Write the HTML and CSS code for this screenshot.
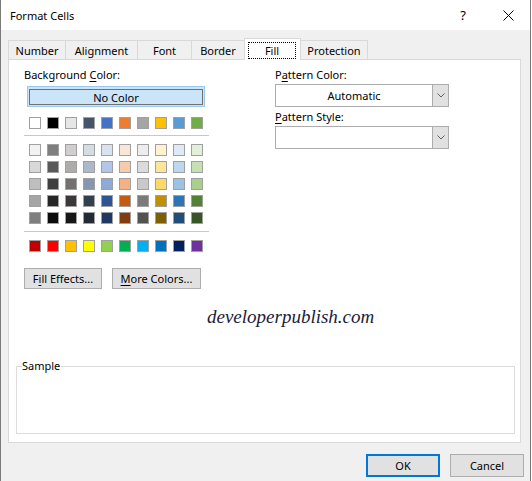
FILE: index.html
```html
<!DOCTYPE html>
<html lang="en">
<head>
    <meta charset="UTF-8">
    <title>Format Cells</title>
    <link rel="stylesheet" href="styles.css">
</head>
<body>
<div class="window">

    <!-- Title bar -->
    <div class="titlebar">
        <span class="title">Format Cells</span>
        <span class="help">?</span>
        <svg class="close" width="11" height="11" viewBox="0 0 11 11">
            <path d="M0.5 0.5 L10.5 10.5 M10.5 0.5 L0.5 10.5" stroke="#000" stroke-width="1" fill="none"/>
        </svg>
    </div>

    <div class="client">
        <!-- Tabs -->
        <div class="tabs">
            <div class="tab tab-number">Number</div>
            <div class="tab tab-alignment">Alignment</div>
            <div class="tab tab-font">Font</div>
            <div class="tab tab-border">Border</div>
            <div class="tab tab-fill active"><span class="focus">Fill</span></div>
            <div class="tab tab-protection">Protection</div>
        </div>

        <!-- Fill panel -->
        <div class="panel">
            <div class="columns">
                <div class="bg-col">
                    <div class="label">Background <u>C</u>olor:</div>
                    <div class="no-color"><span class="no-color-inner">No Color</span></div>
                    <div class="swatch-row theme-row" id="themeRow"></div>
                    <div class="sep"></div>
                    <div class="grid" id="tintGrid"></div>
                    <div class="sep sep-std"></div>
                    <div class="swatch-row std-row" id="stdRow"></div>
                    <div class="btn-row">
                        <button class="btn btn-effects">F<u>i</u>ll Effects...</button>
                        <button class="btn btn-more"><u>M</u>ore Colors...</button>
                    </div>
                </div>

                <div class="pattern-col">
                    <div class="label">P<u>a</u>ttern Color:</div>
                    <div class="dropdown">
                        <span class="dropdown-value">Automatic</span>
                        <span class="dropdown-arrow">
                            <svg width="8" height="5" viewBox="0 0 8 5"><path d="M0.5 0.5 L4 4 L7.5 0.5" stroke="#606060" fill="none"/></svg>
                        </span>
                    </div>
                    <div class="label label-style"><u>P</u>attern Style:</div>
                    <div class="dropdown">
                        <span class="dropdown-value"></span>
                        <span class="dropdown-arrow">
                            <svg width="8" height="5" viewBox="0 0 8 5"><path d="M0.5 0.5 L4 4 L7.5 0.5" stroke="#606060" fill="none"/></svg>
                        </span>
                    </div>
                </div>
            </div>

            <div class="watermark">developerpublish.com</div>

            <div class="sample">
                <span class="sample-label">Sample</span>
            </div>
        </div>

        <!-- Dialog buttons -->
        <div class="footer">
            <button class="btn btn-ok">OK</button>
            <button class="btn btn-cancel">Cancel</button>
        </div>
    </div>
</div>

<script>
    // Office theme colours
    const themeColors = ["#ffffff", "#000000", "#e7e6e6", "#44546a", "#4472c4", "#ed7d31", "#a5a5a5", "#ffc000", "#5b9bd5", "#70ad47"];
    const tints = [
        ["#f2f2f2", "#7f7f7f", "#d0cece", "#d6dce4", "#d9e2f3", "#fbe5d5", "#ededed", "#fff2cc", "#deebf6", "#e2efd9"],
        ["#d8d8d8", "#595959", "#aeabab", "#adb9ca", "#b4c6e7", "#f7cbac", "#dbdbdb", "#fee599", "#bdd7ee", "#c5e0b3"],
        ["#bfbfbf", "#3f3f3f", "#757070", "#8496b0", "#8eaadb", "#f4b183", "#c9c9c9", "#ffd965", "#9cc3e5", "#a8d08d"],
        ["#a5a5a5", "#262626", "#3a3838", "#323f4f", "#2f5496", "#c55a11", "#7b7b7b", "#bf9000", "#2e75b5", "#538135"],
        ["#7f7f7f", "#0c0c0c", "#171616", "#222a35", "#1f3864", "#833c0b", "#525252", "#7f6000", "#1e4e79", "#375623"]
    ];
    const standardColors = ["#c00000", "#ff0000", "#ffc000", "#ffff00", "#92d050", "#00b050", "#00b0f0", "#0070c0", "#002060", "#7030a0"];

    function fillRow(row, colors) {
        colors.forEach(color => {
            const sw = document.createElement("div");
            sw.className = "swatch";
            sw.style.background = color;
            row.appendChild(sw);
        });
    }

    fillRow(document.getElementById("themeRow"), themeColors);
    fillRow(document.getElementById("stdRow"), standardColors);

    const grid = document.getElementById("tintGrid");
    tints.forEach(colors => {
        const row = document.createElement("div");
        row.className = "swatch-row";
        fillRow(row, colors);
        grid.appendChild(row);
    });
</script>
</body>
</html>
```

FILE: styles.css
```css
/* Basic styling */
body {
    margin: 0;
    font-family: "Noto Sans", Arial, sans-serif;
    font-size: 11px;
    color: #000;
    background-color: white;
}

u {
    text-decoration-thickness: 1px;
    text-underline-offset: 2px;
}

.window {
    width: 529px;
    height: 481px;
    border-left: 1px solid #7a7a7a;
    border-right: 1px solid #7a7a7a;
    background-color: #f0f0f0;
    display: flex;
    flex-direction: column;
}

/* Title bar */
.titlebar {
    height: 30px;
    background-color: white;
    display: flex;
    align-items: center;
    padding-left: 9px;
    flex-shrink: 0;
}

.title {
    flex: 1;
}

.help {
    font-size: 13px;
    margin-right: 37px;
}

.close {
    margin-right: 16px;
}

/* Client area */
.client {
    flex: 1;
    padding: 8px 0 0 7px;
}

/* Tabs */
.tabs {
    display: flex;
    align-items: flex-end;
    height: 21px;
}

.tab {
    box-sizing: border-box;
    height: 19px;
    border: 1px solid #d9d9d9;
    border-bottom: none;
    margin-right: -1px;
    display: flex;
    align-items: center;
    justify-content: center;
    padding-top: 1px;
    background-color: #f0f0f0;
}

.tab-number { width: 58px; }
.tab-alignment { width: 73px; }
.tab-font { width: 55px; }
.tab-border { width: 54px; }
.tab-fill { width: 57px; }
.tab-protection { width: 68px; }

.tab.active {
    height: 22px;
    background-color: white;
    margin-bottom: -1px;
    position: relative;
    z-index: 1;
    align-items: flex-start;
    justify-content: flex-start;
    padding-top: 3px;
}

.focus {
    box-sizing: border-box;
    width: 48px;
    height: 17px;
    margin-left: 3px;
    border: 1px dotted #000;
    display: flex;
    align-items: center;
    justify-content: center;
}

/* Panel */
.panel {
    box-sizing: border-box;
    width: 513px;
    height: 384px;
    background-color: white;
    border: 1px solid #d9d9d9;
    padding-top: 7px;
}

.columns {
    display: flex;
    padding-left: 15px;
}

.bg-col {
    width: 185px;
}

.pattern-col {
    margin-left: 66px;
    width: 174px;
}

.label {
    line-height: 16px;
    height: 16px;
}

.label-style {
    margin-top: 2px;
}

/* No Color button */
.no-color {
    box-sizing: border-box;
    width: 178px;
    height: 21px;
    margin: 3px 0 0 3px;
    border: 1px solid #99c9ef;
    background-color: #cce4f7;
    padding: 2px 1px 1px 1px;
}

.no-color-inner {
    box-sizing: border-box;
    height: 100%;
    border: 1px solid #707070;
    display: flex;
    align-items: center;
    justify-content: center;
}

/* Colour swatches */
.swatch-row {
    display: flex;
    gap: 6px;
    padding-left: 5px;
}

.theme-row {
    margin-top: 10px;
}

.swatch {
    box-sizing: border-box;
    width: 12px;
    height: 12px;
    border: 1px solid #a0a0a0;
}

.sep {
    width: 185px;
    height: 1px;
    background-color: #c8c8c8;
    margin-top: 6px;
}

.grid {
    margin-top: 8px;
    display: flex;
    flex-direction: column;
    gap: 5px;
}

.sep-std {
    margin-top: 7px;
}

.std-row {
    margin-top: 8px;
}

/* Buttons */
.btn {
    box-sizing: border-box;
    height: 21px;
    padding: 0;
    border: 1px solid #adadad;
    background-color: #e1e1e1;
    font-family: inherit;
    font-size: 11px;
    color: #000;
}

.btn-row {
    margin-top: 16px;
    display: flex;
    gap: 10px;
}

.btn-effects { width: 78px; }
.btn-more { width: 89px; }

/* Dropdowns */
.dropdown {
    box-sizing: border-box;
    width: 174px;
    height: 23px;
    margin-top: 1px;
    border: 1px solid #acacac;
    display: flex;
    background-color: white;
}

.dropdown-value {
    flex: 1;
    display: flex;
    align-items: center;
    justify-content: center;
}

.dropdown-arrow {
    width: 15px;
    border-left: 1px solid #acacac;
    background-color: #e1e1e1;
    display: flex;
    align-items: center;
    justify-content: center;
}

/* Watermark */
.watermark {
    margin: 16px 0 0 198px;
    height: 24px;
    line-height: 24px;
    font-family: "Liberation Serif", serif;
    font-style: italic;
    font-size: 19px;
    color: #1c1c3a;
}

/* Sample box */
.sample {
    position: relative;
    box-sizing: border-box;
    width: 499px;
    height: 68px;
    margin: 37px 0 0 7px;
    border: 1px solid #dcdcdc;
}

.sample-label {
    position: absolute;
    top: -9px;
    left: 5px;
    line-height: 16px;
    background-color: white;
    padding-right: 1px;
}

/* Dialog buttons */
.footer {
    display: flex;
    justify-content: flex-end;
    gap: 10px;
    padding: 11px 6px 0 0;
}

.btn-ok,
.btn-cancel {
    width: 74px;
    height: 23px;
}

.btn-ok {
    border: 2px solid #0078d7;
}
```
